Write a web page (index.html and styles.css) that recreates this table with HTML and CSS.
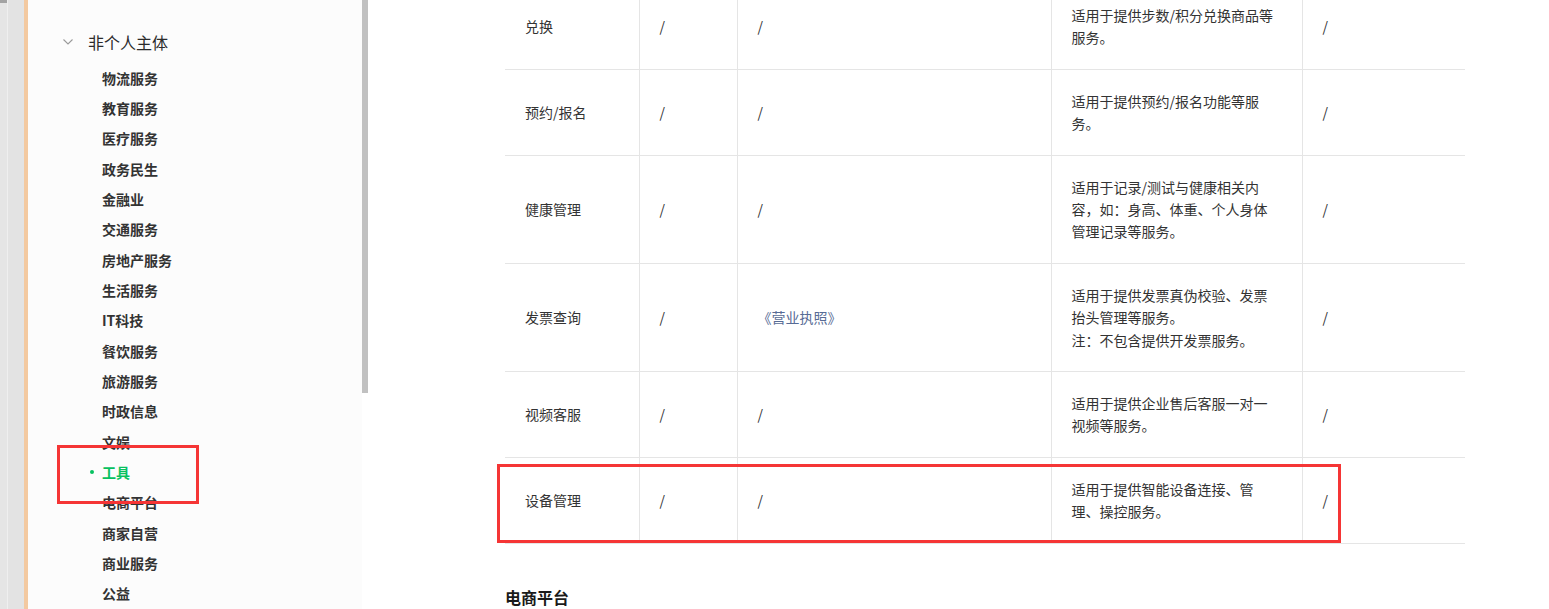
FILE: index.html
```html
<!DOCTYPE html>
<html lang="zh-CN">
<head>
<meta charset="utf-8">
<title>非个人主体 - 服务类目</title>
<link rel="stylesheet" href="styles.css">
</head>
<body>
<div class="page">
  <div class="gutter">
    <div class="gutter-a"></div>
    <div class="gutter-line"></div>
    <div class="gutter-b"></div>
  </div>
  <div class="accent"></div>
  <aside class="sidebar">
    <div class="nav-title">
      <svg class="chevron" width="10" height="6" viewBox="0 0 10 6"><path d="M0.5 0.5 L5 5 L9.5 0.5" fill="none" stroke="#9a9a9a" stroke-width="1.1"/></svg>
      <span>非个人主体</span>
    </div>
    <ul class="nav-list">
      <li>物流服务</li>
      <li>教育服务</li>
      <li>医疗服务</li>
      <li>政务民生</li>
      <li>金融业</li>
      <li>交通服务</li>
      <li>房地产服务</li>
      <li>生活服务</li>
      <li>IT科技</li>
      <li>餐饮服务</li>
      <li>旅游服务</li>
      <li>时政信息</li>
      <li>文娱</li>
      <li class="active">工具</li>
      <li>电商平台</li>
      <li>商家自营</li>
      <li>商业服务</li>
      <li>公益</li>
    </ul>
  </aside>
  <div class="scrollbar"><div class="thumb"></div></div>
  <main class="content">
    <table class="cat-table">
      <colgroup>
        <col class="c1"><col class="c2"><col class="c3"><col class="c4"><col class="c5">
      </colgroup>
      <tbody>
        <tr>
          <td>兑换</td><td>/</td><td>/</td>
          <td class="desc">适用于提供步数/积分兑换商品等服务。</td><td>/</td>
        </tr>
        <tr>
          <td>预约/报名</td><td>/</td><td>/</td>
          <td class="desc">适用于提供预约/报名功能等服务。</td><td>/</td>
        </tr>
        <tr>
          <td>健康管理</td><td>/</td><td>/</td>
          <td class="desc">适用于记录/测试与健康相关内<br>容，如：身高、体重、个人身体管理记录等服务。</td><td>/</td>
        </tr>
        <tr>
          <td>发票查询</td><td>/</td><td><span class="link">《营业执照》</span></td>
          <td class="desc">适用于提供发票真伪校验、发票抬头管理等服务。<br>注：不包含提供开发票服务。</td><td>/</td>
        </tr>
        <tr>
          <td>视频客服</td><td>/</td><td>/</td>
          <td class="desc">适用于提供企业售后客服一对一视频等服务。</td><td>/</td>
        </tr>
        <tr>
          <td>设备管理</td><td>/</td><td>/</td>
          <td class="desc">适用于提供智能设备连接、管理、操控服务。</td><td>/</td>
        </tr>
      </tbody>
    </table>
    <h3 class="section-title">电商平台</h3>
  </main>
  <div class="annot annot-side"></div>
  <div class="annot annot-row"></div>
</div>
</body>
</html>
```

FILE: styles.css
```css
* { box-sizing: border-box; }
html, body { margin: 0; padding: 0; }
body {
  font-family: "Noto Sans CJK SC", "Noto Sans", sans-serif;
  color: #333;
  background: #fff;
  height: 609px;
  overflow: hidden;
}
.page {
  position: relative;
  display: flex;
  height: 609px;
}
.gutter { display: flex; width: 24px; flex: none; }
.gutter-a { width: 7px; background: linear-gradient(#a3a3a3 0, #a3a3a3 3px, #e5e5e5 3px); }
.gutter-line { width: 1px; background: #efefef; }
.gutter-b { width: 16px; background: #e3e3e3; }
.accent { width: 4px; flex: none; background: #f3c9a0; }

.sidebar {
  width: 334px;
  flex: none;
  background: #fcfcfc;
  padding: 30px 0 0 35px;
}
.nav-title {
  display: flex;
  align-items: center;
  gap: 15px;
  height: 24px;
  font-size: 16px;
  color: #2b2b2b;
}
.chevron { display: block; flex: none; }
.nav-list {
  list-style: none;
  margin: 8.5px 0 0;
  padding: 0 0 0 39px;
}
.nav-list li {
  position: relative;
  height: 30.35px;
  line-height: 30.35px;
  font-size: 14px;
  font-weight: 700;
  color: #333;
}
.nav-list li.active { color: #07c160; }
.nav-list li.active::before {
  content: "";
  position: absolute;
  left: -12px;
  top: 13px;
  width: 4px;
  height: 4px;
  border-radius: 50%;
  background: #07c160;
}

.scrollbar { width: 6px; flex: none; background: #fff; }
.thumb { height: 393px; background: #c1c1c1; }

.content {
  flex: 1;
  padding-left: 137px;
}
.cat-table {
  width: 960px;
  margin-top: -17px;
  border-collapse: collapse;
  table-layout: fixed;
  font-size: 14px;
  line-height: 22.4px;
  color: #333;
}
.c1 { width: 134px; }
.c2 { width: 98px; }
.c3 { width: 314px; }
.c4 { width: 251px; }
.c5 { width: 163px; }
.cat-table td {
  padding: 20px 20px;
  border-top: 1px solid #e5e5e5;
  border-bottom: 1px solid #e5e5e5;
  vertical-align: middle;
}
.cat-table td + td { border-left: 1px solid #e5e5e5; }
.cat-table td.desc { padding-right: 26px; }
.link { color: #576b95; }

.section-title {
  margin: 41px 0 0;
  font-size: 16px;
  line-height: 24px;
  font-weight: 700;
  color: #1a1a1a;
}

.annot {
  position: absolute;
  border: 3px solid #f53535;
}
.annot-side { left: 57px; top: 445px; width: 142px; height: 59px; }
.annot-row { left: 497px; top: 464px; width: 844px; height: 79px; }
```
